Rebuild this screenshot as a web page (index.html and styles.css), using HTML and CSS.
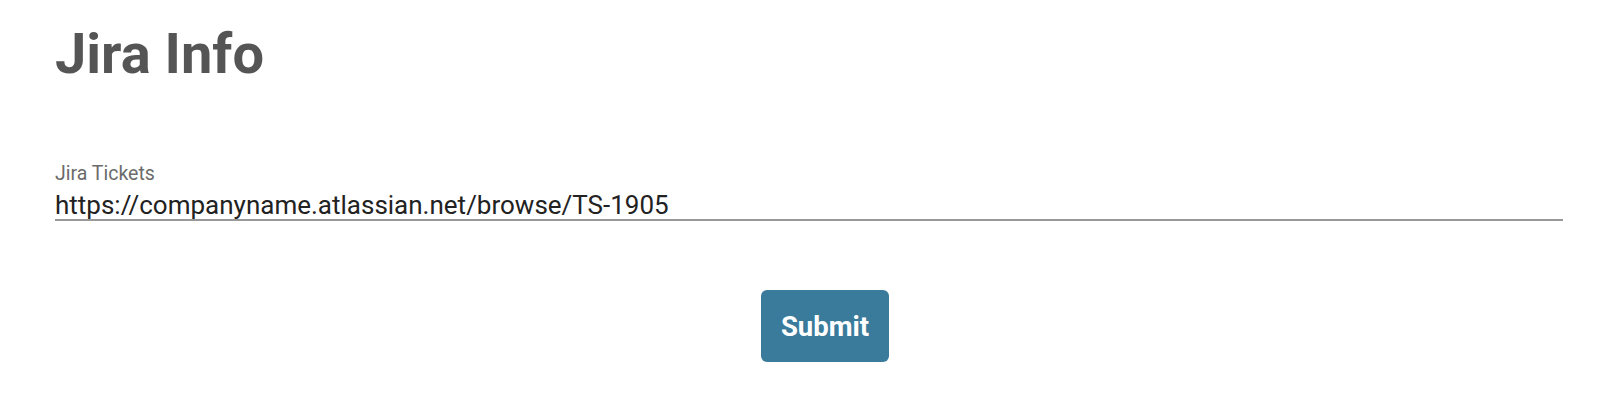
FILE: index.html
```html
<!doctype html>
<html lang="en">
  <head>
    <meta charset="UTF-8" />
    <meta name="viewport" content="width=device-width, initial-scale=1.0" />
    <title>Jira Info</title>
    <link rel="stylesheet" href="styles.css">
  </head>
  <body>
    <div class="container">
      <h1>Jira Info</h1>

      <div class="field">
        <label for="tickets">Jira Tickets</label>
        <input type="text" id="tickets" value="https://companyname.atlassian.net/browse/TS-1905" />
      </div>

      <div class="actions">
        <button type="button">Submit</button>
      </div>
    </div>
  </body>
</html>
```

FILE: styles.css
```css
body {
  font-family: Roboto, "Noto Sans", sans-serif;
  margin: 0;
  background-color: #fff;
  color: #222;
}
.container {
  padding: 0 41px 0 55px;
}
h1 {
  margin: 0;
  padding-top: 22px;
  font-size: 56px;
  line-height: 64px;
  font-weight: 700;
  color: #555;
}
.field {
  margin-top: 78px;
  display: flex;
  flex-direction: column;
}
label {
  font-size: 19.5px;
  line-height: 20px;
  color: #6b6b6b;
}
input[type='text'] {
  font-family: inherit;
  font-size: 26px;
  color: #222;
  border: none;
  border-bottom: 2px solid #999;
  padding: 0 0 1px 0;
  margin: 8px 0 0 0;
  outline: none;
  height: 29px;
  line-height: 26px;
  box-sizing: border-box;
  background: transparent;
}
.actions {
  display: flex;
  justify-content: center;
  padding-left: 32px;
  margin-top: 69px;
}
button {
  width: 128px;
  height: 72px;
  border: none;
  border-radius: 6px;
  background-color: #3a7b9c;
  color: #fff;
  font-family: inherit;
  font-size: 27.5px;
  font-weight: 700;
  cursor: pointer;
}
```
